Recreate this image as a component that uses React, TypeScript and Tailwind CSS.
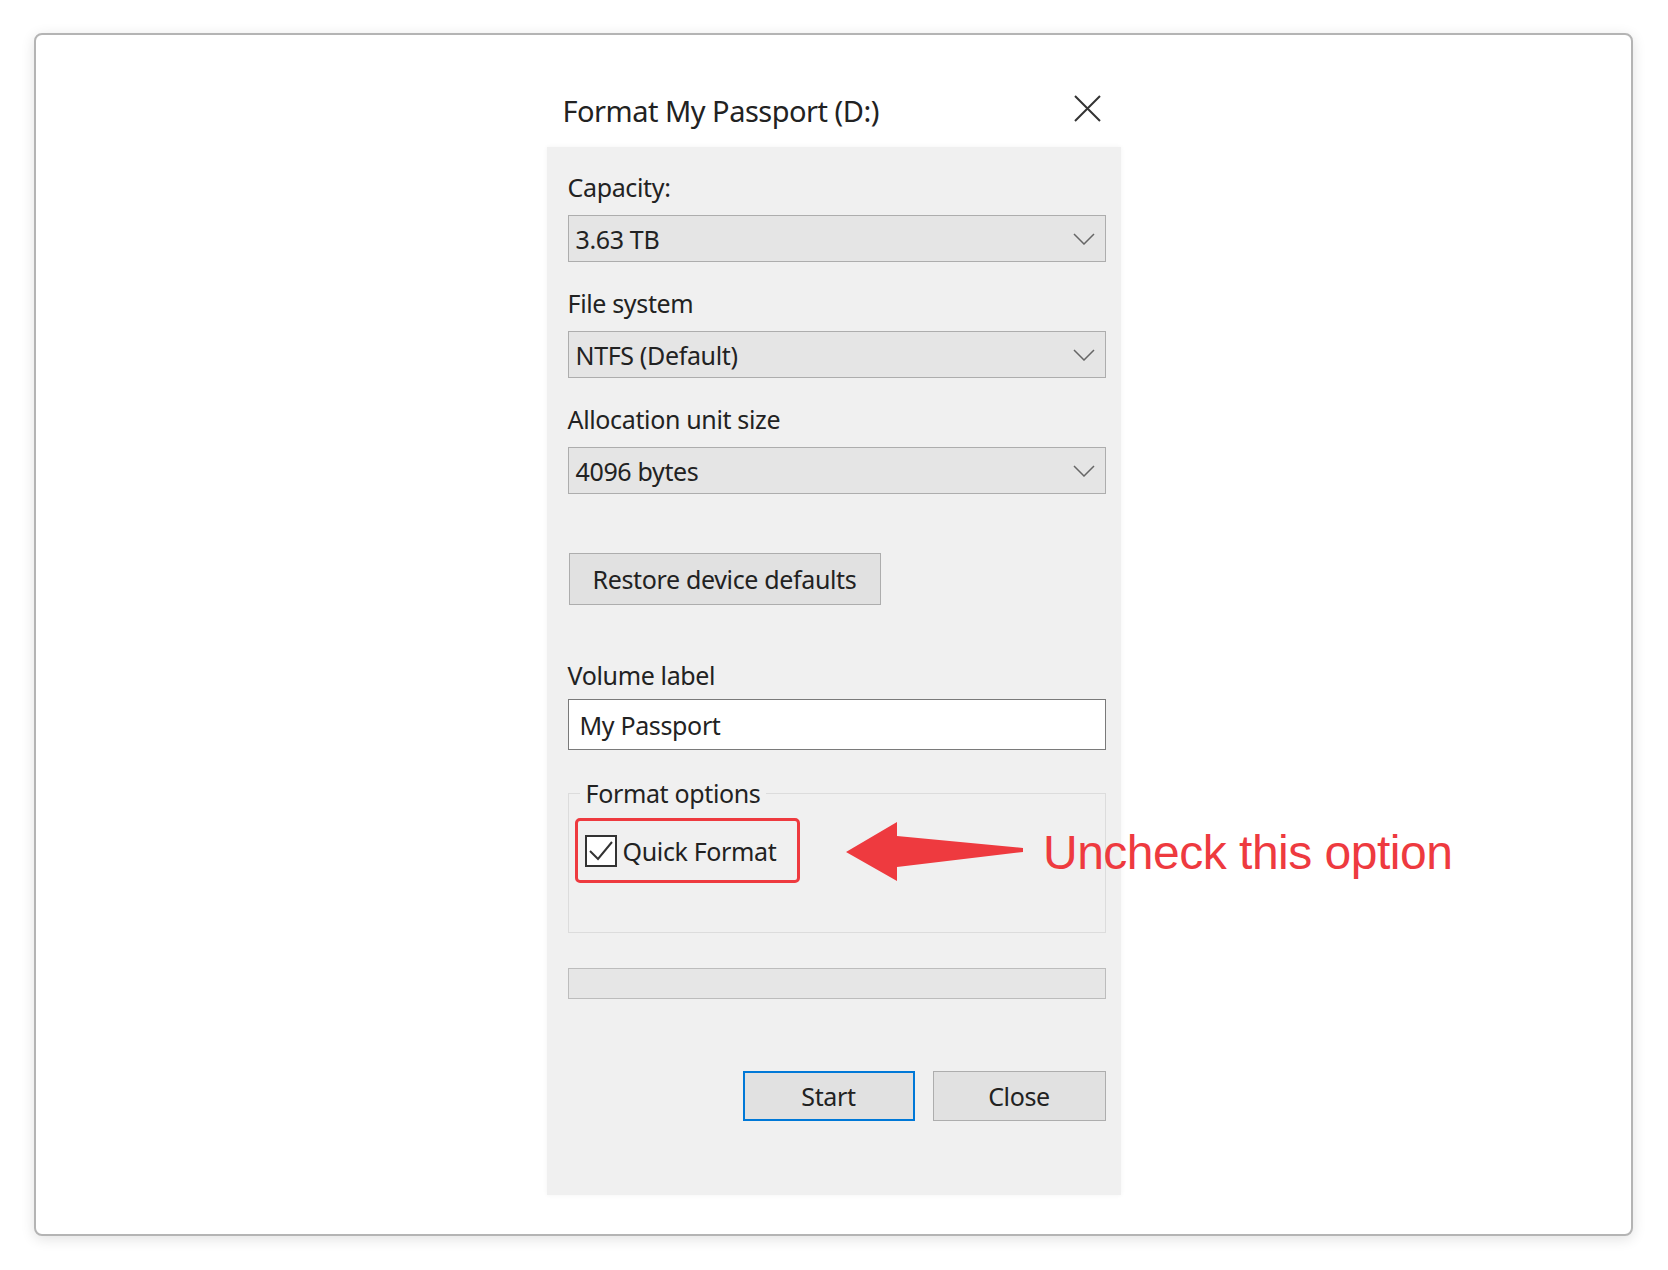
import { ChevronDown } from "lucide-react";

const ui = "font-['Noto_Sans','Open_Sans',sans-serif]";
const body = "text-[25px] leading-[32px] tracking-[-0.35px]";

function Combo({ label, value }: { label: string; value: string }) {
  return (
    <div className="mt-[25px] first:mt-0">
      <div className={body}>{label}</div>
      <div className="mt-[12px] h-[47px] bg-[#e5e5e5] border-[1.5px] border-[#adadad] flex items-center justify-between pl-[7px] pr-[10px]">
        <span className={body}>{value}</span>
        <svg width="22" height="12" viewBox="0 0 22 12" fill="none">
          <path d="M1 1 L11 11 L21 1" stroke="#666" strokeWidth="1.5" />
        </svg>
      </div>
    </div>
  );
}

export default function App() {
  return (
    <div className="relative w-full h-[1270px] bg-white pt-[33px] pl-[34px]">
      {/* card */}
      <div className="w-[1599px] h-[1203px] border-2 border-[#b4b4b4] rounded-[8px] shadow-[0_3px_14px_rgba(0,0,0,0.12)] bg-white">
        <div className={`w-[574px] mx-auto text-[#222] ${ui}`}>
          {/* title row */}
          <div className="h-[112px] pt-[56px] pl-[16px] pr-[20px] flex items-start justify-between">
            <span className="text-[29px] leading-[40px] tracking-[-0.5px]">Format My Passport (D:)</span>
            <svg width="27" height="27" viewBox="0 0 27 27" className="mt-[4px]" fill="none">
              <path d="M1 1 L26 26 M26 1 L1 26" stroke="#333" strokeWidth="2" />
            </svg>
          </div>

          {/* panel */}
          <div className="h-[1048px] bg-[#f0f0f0] shadow-[0_0_5px_rgba(0,0,0,0.05)] pt-[24px] pl-[21px] pr-[15px]">
            <Combo label="Capacity:" value="3.63 TB" />
            <Combo label="File system" value="NTFS (Default)" />
            <Combo label="Allocation unit size" value="4096 bytes" />

            <button className={`mt-[59px] ml-[1px] w-[312px] h-[52px] bg-[#e1e1e1] border-[1.5px] border-[#adadad] text-[#222] ${body}`}>
              Restore device defaults
            </button>

            <div className={`mt-[54px] ${body}`}>Volume label</div>
            <div className="mt-[8px] h-[51px] bg-white border-[1.5px] border-[#7a7a7a] flex items-center pl-[11px]">
              <span className={body}>My Passport</span>
            </div>

            <fieldset className="mt-[27px] h-[156px] border border-[#dcdcdc] pl-[6px] pt-0">
              <legend className={`ml-[5px] px-[6px] ${body}`}>Format options</legend>
              <div className="mt-[9px] w-[225px] h-[65px] border-[3px] border-[#ee3a3f] rounded-[5px] flex items-center pl-[7px] gap-[6px]">
                <div className="w-[32px] h-[32px] border-2 border-[#333] bg-white flex items-center justify-center">
                  <svg width="26" height="22" viewBox="0 0 26 22" fill="none">
                    <path d="M2 11 L10 19 L24 2" stroke="#333" strokeWidth="2" />
                  </svg>
                </div>
                <span className={body}>Quick Format</span>
              </div>
            </fieldset>

            <div className="mt-[35px] h-[31px] bg-[#e6e6e6] border-[1.5px] border-[#bcbcbc]" />

            <div className="mt-[72px] flex justify-end gap-[18px]">
              <button className={`w-[172px] h-[50px] bg-[#e1e1e1] border-2 border-[#0078d7] text-[#222] ${body}`}>
                Start
              </button>
              <button className={`w-[173px] h-[50px] bg-[#e1e1e1] border-[1.5px] border-[#adadad] text-[#222] ${body}`}>
                Close
              </button>
            </div>
          </div>
        </div>
      </div>

      {/* annotation arrow */}
      <svg className="absolute left-0 top-0 pointer-events-none" width="1668" height="1270">
        <polygon
          points="846,852 897,822 897,836 1023,848 1023,852 897,867 897,881"
          fill="#ee3a3f"
        />
      </svg>
      <div className="absolute left-[1043px] top-[829px] font-['Liberation_Sans',Arial,sans-serif] text-[48px] leading-[48px] tracking-[-0.5px] text-[#ee3a3f] whitespace-nowrap">
        Uncheck this option
      </div>
    </div>
  );
}
